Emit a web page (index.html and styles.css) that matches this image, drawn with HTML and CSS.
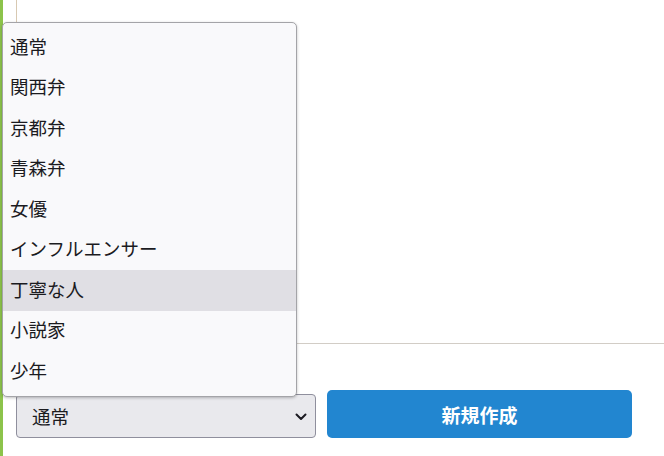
FILE: index.html
```html
<!DOCTYPE html>
<html lang="ja">
<head>
<meta charset="UTF-8">
<meta name="viewport" content="width=device-width, initial-scale=1.0">
<title>新規作成</title>
<link rel="stylesheet" href="styles.css">
</head>
<body>
<div class="page">
    <div class="editor"></div>

    <div class="form-row">
        <div class="select-wrap">
            <select class="style-select">
                <option>通常</option>
                <option>関西弁</option>
                <option>京都弁</option>
                <option>青森弁</option>
                <option>女優</option>
                <option>インフルエンサー</option>
                <option>丁寧な人</option>
                <option>小説家</option>
                <option>少年</option>
            </select>
            <svg class="chevron" width="12" height="8" viewBox="0 0 12 8">
                <path d="M1.5 1.5 L6 6 L10.5 1.5" fill="none" stroke="#1c1b22" stroke-width="2" stroke-linecap="round" stroke-linejoin="round"/>
            </svg>
        </div>
        <button class="create-btn">新規作成</button>
    </div>

    <ul class="dropdown">
        <li class="dropdown-item">通常</li>
        <li class="dropdown-item">関西弁</li>
        <li class="dropdown-item">京都弁</li>
        <li class="dropdown-item">青森弁</li>
        <li class="dropdown-item">女優</li>
        <li class="dropdown-item">インフルエンサー</li>
        <li class="dropdown-item hover">丁寧な人</li>
        <li class="dropdown-item">小説家</li>
        <li class="dropdown-item">少年</li>
    </ul>
</div>
</body>
</html>
```

FILE: styles.css
```css
body, html {
    margin: 0;
    padding: 0;
    height: 100%;
    overflow: hidden;
    background-color: #fff;
    font-family: "Noto Sans CJK JP", "Noto Sans", sans-serif;
}

.page {
    position: relative;
    height: 100%;
    border-left: 3px solid #8cc34b;
    padding-left: 13px;
    padding-right: 32px;
}

.editor {
    height: 343px;
    margin-right: -32px;
    border-left: 1px solid #d8c9b2;
    border-bottom: 1px solid #d2cdc6;
}

.form-row {
    display: flex;
    align-items: flex-end;
    gap: 11px;
    margin-top: 46px;
}

.select-wrap {
    position: relative;
    width: 300px;
    flex: 0 0 auto;
}

.style-select {
    appearance: none;
    -webkit-appearance: none;
    display: block;
    width: 100%;
    height: 44px;
    margin: 0;
    padding: 0 0 0 15px;
    font-family: inherit;
    font-size: 18.5px;
    color: #1b1b1f;
    background-color: #e9e9ed;
    border: 1px solid #8f8f9d;
    border-radius: 4px;
}

.chevron {
    position: absolute;
    right: 9px;
    top: 19px;
}

.create-btn {
    flex: 1;
    height: 48px;
    border: none;
    border-radius: 5px;
    background-color: #2286d0;
    color: #fff;
    font-family: inherit;
    font-size: 19px;
    font-weight: bold;
}

.dropdown {
    position: absolute;
    left: -1px;
    top: 22px;
    width: 293px;
    margin: 0;
    padding: 4px 0 4px;
    list-style: none;
    background-color: #f9f9fb;
    border: 1px solid #a4a4a8;
    border-radius: 5px;
    box-shadow: 0 1px 3px rgba(0, 0, 0, 0.25);
}

.dropdown-item {
    display: flex;
    align-items: center;
    height: 40.5px;
    padding-left: 7px;
    padding-bottom: 3px;
    box-sizing: border-box;
    font-size: 18.5px;
    color: #1b1b1f;
}

.dropdown-item.hover {
    background-color: #e0dfe4;
}
```
